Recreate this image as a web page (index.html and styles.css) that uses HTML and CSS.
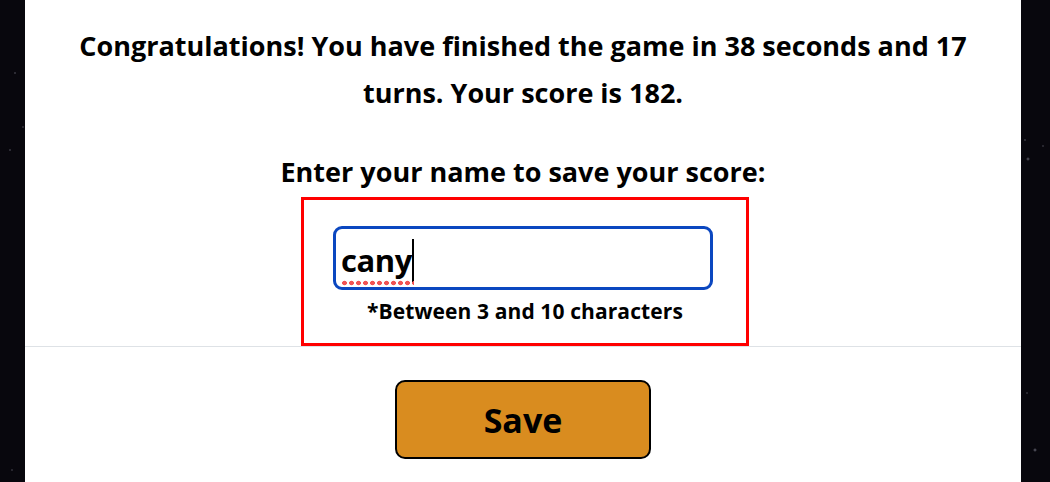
FILE: index.html
```html
<!DOCTYPE html>
<html lang="en">
<head>
<meta charset="utf-8">
<title>Game finished</title>
<link rel="stylesheet" href="styles.css">
</head>
<body>
  <div class="modal">
    <div class="modal-body">
      <p class="message">Congratulations! You have finished the game in 38 seconds and 17 turns. Your score is 182.</p>
      <p class="prompt">Enter your name to save your score:</p>
      <div class="name-box">
        <div class="field"><span class="value">cany</span><span class="caret"></span></div>
        <p class="hint">*Between 3 and 10 characters</p>
      </div>
    </div>
    <div class="modal-footer">
      <button class="save-btn" type="button">Save</button>
    </div>
  </div>
</body>
</html>
```

FILE: styles.css
```css
html, body {
  height: 100%;
}

body {
  margin: 0;
  background-color: #08070d;
  background-image:
    radial-gradient(circle at 15px 73px, rgba(200,200,220,0.35) 0, transparent 1.5px),
    radial-gradient(circle at 23px 127px, rgba(200,200,220,0.3) 0, transparent 1.5px),
    radial-gradient(circle at 10px 150px, rgba(200,200,220,0.35) 0, transparent 1.5px),
    radial-gradient(circle at 12px 470px, rgba(200,200,220,0.3) 0, transparent 1.5px),
    radial-gradient(circle at 1025px 140px, rgba(200,200,220,0.35) 0, transparent 1.5px),
    radial-gradient(circle at 1043px 146px, rgba(200,200,220,0.3) 0, transparent 1.5px),
    radial-gradient(circle at 1028px 159px, rgba(200,200,220,0.45) 0, transparent 2px),
    radial-gradient(circle at 1027px 393px, rgba(200,200,220,0.3) 0, transparent 1.5px),
    radial-gradient(circle at 1035px 450px, rgba(200,200,220,0.5) 0, transparent 2px);
  font-family: "Open Sans", "DejaVu Sans", sans-serif;
  font-weight: 700;
  color: #000;
  overflow: hidden;
}

.modal {
  margin: 0 29px 0 25px;
  min-height: 100%;
  background: #fff;
  display: flex;
  flex-direction: column;
}

.modal-body {
  padding-top: 22px;
  display: flex;
  flex-direction: column;
  align-items: center;
}

.message {
  margin: 0;
  max-width: 905px;
  font-size: 27px;
  line-height: 47px;
  text-align: center;
}

.prompt {
  margin: 32px 0 0;
  font-size: 27px;
  line-height: 47px;
  text-align: center;
}

.name-box {
  margin: 2px 0 0 4px;
  width: 442px;
  border: 3px solid #ff0000;
  padding: 26px 0 20px;
  display: flex;
  flex-direction: column;
  align-items: center;
}

.field {
  box-sizing: border-box;
  width: 380px;
  height: 64px;
  margin-left: -4px;
  border: 3px solid #0b47c0;
  border-radius: 9px;
  padding: 10px 5px 0 5px;
  display: flex;
  align-items: flex-start;
}

.value {
  position: relative;
  font-size: 31px;
  line-height: 42px;
  letter-spacing: -0.4px;
}

.value::after {
  content: "";
  position: absolute;
  left: 0;
  right: -2px;
  bottom: -5px;
  height: 6px;
  background: radial-gradient(circle, #f25454 2.1px, transparent 2.6px) 0 0 / 7px 6px repeat-x;
}

.caret {
  width: 1.5px;
  height: 43px;
  margin-top: 0;
  background: #000;
}

.hint {
  margin: 9px 0 0;
  font-size: 21px;
  line-height: 24px;
  letter-spacing: 0.1px;
}

.modal-footer {
  flex: 1;
  border-top: 1px solid #dee2e6;
  padding-top: 33px;
  display: flex;
  justify-content: center;
}

.save-btn {
  box-sizing: border-box;
  width: 256px;
  height: 79px;
  border: 2px solid #000;
  border-radius: 10px;
  background: #d98c1f;
  font-family: inherit;
  font-weight: 700;
  font-size: 34px;
  color: #000;
  padding: 0;
  cursor: pointer;
}
```
